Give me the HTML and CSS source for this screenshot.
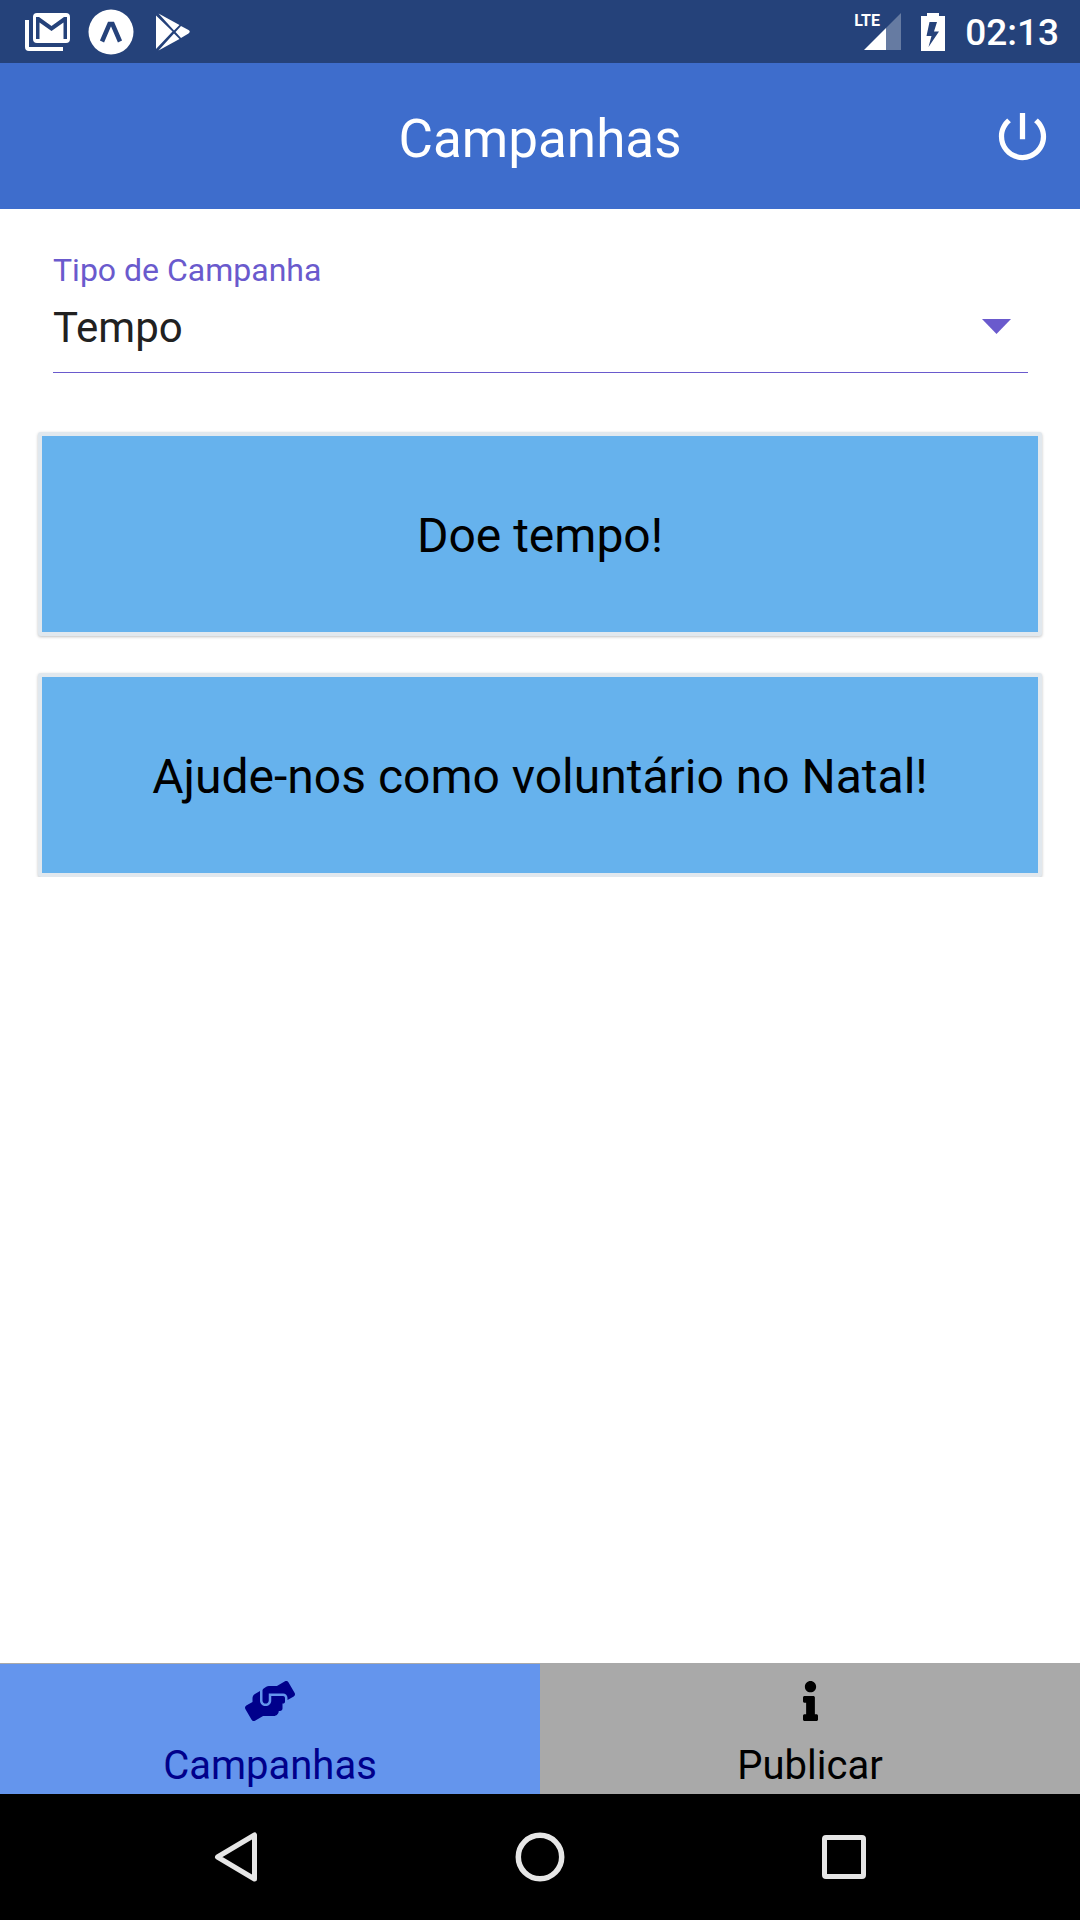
FILE: index.html
```html
<!DOCTYPE html>
<html lang="pt-BR">
<head>
<meta charset="utf-8">
<meta name="viewport" content="width=device-width, initial-scale=1">
<title>Campanhas</title>
<link rel="stylesheet" href="styles.css">
</head>
<body>
<div class="screen">
  <div class="status">
    <div class="status-group notices">
      <svg width="46" height="40" viewBox="0 0 46 40" aria-hidden="true">
        <path fill="#fff" fill-rule="evenodd" d="M12 1h29q4 0 4 4v22q0 4-4 4H12q-4 0-4-4V5q0-4 4-4zM11 5v22h3.500V10.500L26.500 19l12-8.500V27H42V5h-3L26.500 14 14 5z"/>
        <path fill="#fff" d="M0 8h4v27h34v4H4q-4 0-4-4z"/>
      </svg>
      <svg width="46" height="46" viewBox="0 0 46 46" aria-hidden="true">
        <circle cx="23" cy="23" r="22.500" fill="#fff"/>
        <path fill="none" stroke="#25427a" stroke-width="4.500" d="M14 32.500 21.500 15h3L32 32.500"/>
      </svg>
      <svg width="36" height="38" viewBox="0 0 36 38" aria-hidden="true">
        <path fill="#fff" d="M1 2.500 17.500 18.500 1 36zM3.500 0.500 24.500 12 19 17.500zM26 13 33.500 17q2.500 1.500 0 3.500L26 25 20.500 19zM19 20.500 24.500 26 3.500 37.500z"/>
      </svg>
    </div>
    <div class="status-group">
      <div class="signal">
        <span class="network">LTE</span>
        <svg width="37" height="37" viewBox="0 0 37 37" aria-hidden="true">
          <path fill="#fff" fill-opacity=".3" d="M37 0v37H22V15z"/>
          <path fill="#fff" d="M0 37 22 15v22z"/>
        </svg>
      </div>
      <svg width="24" height="38" viewBox="0 0 24 38" aria-hidden="true">
        <path fill="#fff" fill-rule="evenodd" d="M6 0h12v3h6v35H0V3h6zM8.500 9 5.500 23h5L7.500 34 18 18.500h-5L16 9z"/>
      </svg>
      <time class="clock">02:13</time>
    </div>
  </div>

  <header class="header">
    <h1 class="title">Campanhas</h1>
    <button class="power" type="button" aria-label="Sair">
      <svg width="63" height="63" viewBox="0 0 24 24" aria-hidden="true"><path fill="#fff" d="M13 3h-2v10h2V3zm4.830 2.170l-1.420 1.420C17.990 7.860 19 9.810 19 12c0 3.870-3.130 7-7 7s-7-3.130-7-7c0-2.190 1.010-4.140 2.580-5.420L6.170 5.170C4.230 6.820 3 9.260 3 12c0 4.970 4.030 9 9 9s9-4.030 9-9c0-2.740-1.230-5.180-3.170-6.830z"/></svg>
    </button>
  </header>

  <main class="content">
    <div class="field">
      <label class="field-label" for="tipo">Tipo de Campanha</label>
      <div class="field-control">
        <select class="field-select" id="tipo"><option>Tempo</option></select>
        <svg class="field-arrow" width="29" height="15" viewBox="0 0 29 15" aria-hidden="true"><path fill="#6a5acd" d="M0 0h29L14.500 15z"/></svg>
      </div>
    </div>
    <div class="list">
      <button class="card" type="button">Doe tempo!</button>
      <button class="card" type="button">Ajude-nos como voluntário no Natal!</button>
    </div>
  </main>

  <nav class="tabs">
    <button class="tab tab-active" type="button">
      <svg width="50" height="40" viewBox="0 0 640 512" aria-hidden="true"><path fill="currentColor" d="M488 192H336v56c0 39.700-32.300 72-72 72s-72-32.300-72-72V126.400l-64.900 39C107.800 176.900 96 197.800 96 220.200v47.300l-80 46.200C.7 322.500-4.600 342.100 4.300 357.400l80 138.600c8.800 15.300 28.400 20.500 43.700 11.700L231.400 448H368c35.300 0 64-28.700 64-64h16c17.700 0 32-14.300 32-32v-64h8c13.300 0 24-10.700 24-24v-48c0-13.300-10.700-24-24-24zm147.700-37.400L555.700 16C546.900.7 527.300-4.500 512 4.300L408.600 64H306.400c-12 0-23.700 3.400-33.900 9.700L239 94.600c-9.400 5.800-15 16.100-15 27.100V248c0 22.100 17.900 40 40 40s40-17.900 40-40v-88h184c30.900 0 56 25.100 56 56v28.500l80-46.200c15.300-8.900 20.500-28.400 11.700-43.700z"/></svg>
      <span>Campanhas</span>
    </button>
    <button class="tab" type="button">
      <svg width="15" height="40" viewBox="0 0 192 512" aria-hidden="true"><path fill="currentColor" d="M20 424.229h20V279.771H20c-11.046 0-20-8.954-20-20V212c0-11.046 8.954-20 20-20h112c11.046 0 20 8.954 20 20v212.229h20c11.046 0 20 8.954 20 20V492c0 11.046-8.954 20-20 20H20c-11.046 0-20-8.954-20-20v-47.771c0-11.046 8.954-20 20-20zM96 0C56.235 0 24 32.235 24 72s32.235 72 72 72 72-32.235 72-72S135.764 0 96 0z"/></svg>
      <span>Publicar</span>
    </button>
  </nav>

  <div class="system">
    <button class="system-button" type="button" aria-label="Voltar">
      <svg width="52" height="52" viewBox="0 0 52 52" aria-hidden="true"><path fill="none" stroke="#e6e6e6" stroke-width="5" stroke-linejoin="round" d="M44.500 4v44L7.500 26z"/></svg>
    </button>
    <button class="system-button" type="button" aria-label="Início">
      <svg width="52" height="52" viewBox="0 0 52 52" aria-hidden="true"><circle cx="26" cy="26" r="21.700" fill="none" stroke="#e6e6e6" stroke-width="5.500"/></svg>
    </button>
    <button class="system-button" type="button" aria-label="Recentes">
      <svg width="52" height="52" viewBox="0 0 52 52" aria-hidden="true"><rect x="6.500" y="6.500" width="39" height="39" rx="1.500" fill="none" stroke="#e6e6e6" stroke-width="5"/></svg>
    </button>
  </div>
</div>
</body>
</html>
```

FILE: styles.css
```css
* {
  box-sizing: border-box;
}

body {
  margin: 0;
  background: #fff;
  color: #000;
  font-family: Roboto, "Noto Sans", sans-serif;
}

button {
  margin: 0;
  padding: 0;
  border: 0;
  background: none;
  color: inherit;
  font: inherit;
}

svg {
  display: block;
}

.screen {
  display: flex;
  flex-direction: column;
  min-height: 100vh;
}

.status {
  display: flex;
  justify-content: space-between;
  height: 63px;
  padding: 0 21px 0 25px;
  background: #25427a;
  color: #fff;
}

.status-group {
  display: flex;
  align-items: center;
  gap: 20px;
}

.notices {
  gap: 17px;
}

.notices svg:last-child {
  margin-left: 4px;
}

.signal {
  position: relative;
  padding-left: 10px;
}

.network {
  position: absolute;
  top: 0;
  left: 0;
  font-size: 16px;
  font-weight: 700;
  line-height: 16px;
}

.clock {
  padding-top: 2px;
  font-size: 37px;
  font-weight: 500;
  line-height: 44px;
}

.header {
  display: grid;
  grid-template-columns: 1fr auto 1fr;
  align-items: center;
  height: 146px;
  padding: 0 26px;
  background: #3e6dcc;
  color: #fff;
}

.title {
  grid-column: 2;
  margin: 0;
  padding-top: 6px;
  font-size: 53px;
  font-weight: 400;
  line-height: 64px;
}

.power {
  justify-self: end;
}

.content {
  flex: 1;
  padding: 41px 38px 0;
}

.field {
  margin: 0 14px 0 15px;
  border-bottom: 1px solid #6a5acd;
}

.field-label {
  display: block;
  color: #6a5acd;
  font-size: 32px;
  line-height: 40px;
}

.field-control {
  display: grid;
  align-items: center;
}

.field-select {
  grid-area: 1 / 1;
  width: 100%;
  height: 82px;
  margin: 0;
  padding: 0 60px 6px 0;
  border: 0;
  background: transparent;
  appearance: none;
  color: #212121;
  font: 42px/50px Roboto, "Noto Sans", sans-serif;
}

.field-arrow {
  grid-area: 1 / 1;
  justify-self: end;
  margin: 0 17px 10px 0;
  pointer-events: none;
}

.list {
  display: grid;
  gap: 37px;
  margin: 0 -4px;
  padding: 59px 4px 0;
  overflow: hidden;
}

.card {
  min-height: 204px;
  padding-top: 3px;
  border: 4px solid #e1e8ee;
  border-radius: 3px;
  background: #66b2ed;
  box-shadow: 0 1px 3px rgba(0, 0, 0, .25);
  font-size: 48px;
  line-height: 56px;
}

.tabs {
  display: grid;
  grid-template-columns: 1fr 1fr;
  border-top: 1px solid #a9a9a9;
}

.tab {
  display: flex;
  flex-direction: column;
  align-items: center;
  gap: 21px;
  height: 130px;
  padding-top: 17px;
  background: #a9a9a9;
  font-size: 40px;
  line-height: 48px;
}

.tab-active {
  background: #6495ed;
  color: #00008b;
}

.system {
  display: grid;
  grid-template-columns: repeat(3, 1fr);
  height: 126px;
  padding: 0 84px;
  background: #000;
}

.system-button {
  display: grid;
  place-items: center;
}
```
